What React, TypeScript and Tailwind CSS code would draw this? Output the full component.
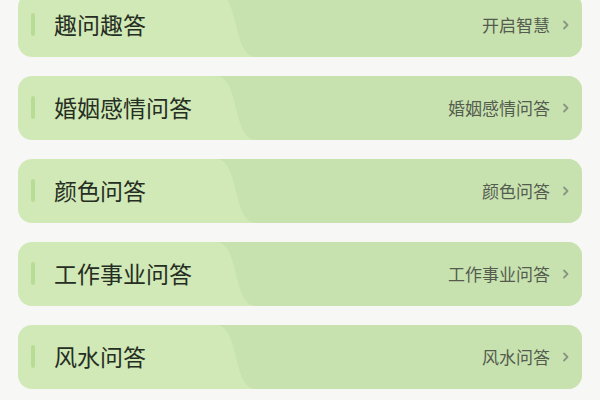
const ITEMS = [
  { title: "趣问趣答", link: "开启智慧" },
  { title: "婚姻感情问答", link: "婚姻感情问答" },
  { title: "颜色问答", link: "颜色问答" },
  { title: "工作事业问答", link: "工作事业问答" },
  { title: "风水问答", link: "风水问答" },
];

function Chevron() {
  return (
    <svg className="w-[9px] h-[12px]" viewBox="0 0 9 12" fill="none" stroke="#8a9683" strokeWidth={1.8} strokeLinecap="round" strokeLinejoin="round">
      <path d="M3 2.5 L6.5 6 L3 9.5" />
    </svg>
  );
}

export default function App() {
  return (
    <div
      className="w-[600px] h-[400px] overflow-hidden bg-[#f7f7f5]"
      style={{ fontFamily: '"Noto Sans CJK SC", "Noto Sans", sans-serif' }}
    >
      <div className="-mt-[7px] px-[18px] flex flex-col gap-[19px]">
        {ITEMS.map((it) => (
          <div
            key={it.title}
            className="relative h-[64px] rounded-[14px] overflow-hidden bg-[#d0e9b6] flex items-center"
          >
            {/* darker wave on the right */}
            <svg className="absolute inset-0 w-full h-full" viewBox="0 0 564 64" preserveAspectRatio="none">
              <path d="M198 0 C222 0, 214 64, 238 64 L564 64 L564 0 Z" fill="#c8e2af" />
            </svg>
            <div className="relative flex items-center w-full -mt-[1px]">
              <span className="ml-[13px] w-[4px] h-[23px] rounded-full bg-[#b9dc94]" />
              <span className="ml-[19px] text-[23px] leading-none text-[#262e23]">{it.title}</span>
              <span className="ml-auto text-[17px] leading-none text-[#545c4f]">{it.link}</span>
              <span className="ml-[11px] mr-[12px] flex items-center">
                <Chevron />
              </span>
            </div>
          </div>
        ))}
      </div>
    </div>
  );
}
